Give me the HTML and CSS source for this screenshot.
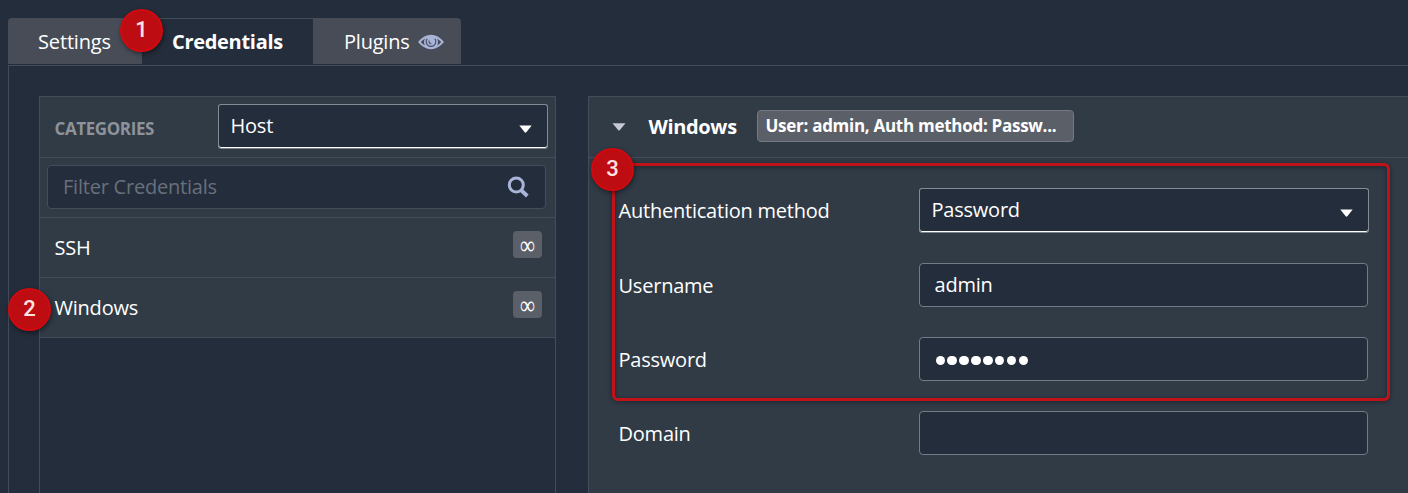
FILE: index.html
```html
<!DOCTYPE html>
<html lang="en">
<head>
<meta charset="utf-8">
<title>Credentials</title>
<link rel="stylesheet" href="styles.css">
</head>
<body>
<nav class="tabs">
  <div class="tab tab-settings">Settings</div>
  <div class="tab tab-active">Credentials</div>
  <div class="tab tab-plugins">Plugins
    <svg class="eye" width="26" height="16" viewBox="0 0 26 16"><path fill="#a9b5d8" fill-rule="evenodd" d="M0 8Q6 .7 13 .7T26 8Q20 15.2 13 15.2T0 8ZM2.800 8Q4.500 10 7 11.500Q5 8 7 4.500Q4.500 6 2.800 8ZM23.200 8Q21.500 6 19 4.500Q21 8 19 11.500Q21.500 10 23.200 8Z"/><path d="M9.300 4.800Q7.800 6 8.300 8.300Q9.200 12.300 13 12.300T17.700 8.300Q18.200 6 16.700 4.800M11 6.500Q10.800 9.600 13.300 9.600" fill="none" stroke="#4a5065" stroke-width="1.200"/></svg>
  </div>
</nav>
<main class="content">
  <section class="panel categories">
    <header class="cat-head">
      <span class="cat-title">CATEGORIES</span>
      <div class="select select-host"><span>Host</span><svg class="caret" width="13" height="8" viewBox="0 0 13 8"><path d="M.3.400h12.400L7.300 7.300q-.8.800-1.600 0z" fill="#fff"/></svg></div>
    </header>
    <div class="search-row">
      <div class="search"><span>Filter Credentials</span><svg width="22" height="22" viewBox="0 0 22 22" fill="none" stroke="#a9b5d8"><circle cx="9.300" cy="9" r="7" stroke-width="3"/><path d="M14 14l6.300 6" stroke-width="3.800"/></svg></div>
    </div>
    <div class="item"><span>SSH</span><span class="infinity"><span>∞</span></span></div>
    <div class="item"><span>Windows</span><span class="infinity"><span>∞</span></span></div>
  </section>
  <section class="panel details">
    <header class="detail-head">
      <svg width="14" height="8" viewBox="0 0 14 8"><path d="M.5.300h13L7.700 7.200q-.7.700-1.400 0z" fill="#c6c9d3"/></svg>
      <h2 class="detail-title">Windows</h2>
      <span class="summary">User: admin, Auth method: Passw...</span>
    </header>
    <div class="form">
      <div class="label">Authentication method</div>
      <div class="select"><span>Password</span><svg class="caret" width="13" height="8" viewBox="0 0 13 8"><path d="M.3.400h12.400L7.300 7.300q-.8.800-1.600 0z" fill="#fff"/></svg></div>
      <div class="label">Username</div>
      <div class="field">admin</div>
      <div class="label">Password</div>
      <div class="field dots"><i></i><i></i><i></i><i></i><i></i><i></i><i></i><i></i></div>
      <div class="label">Domain</div>
      <div class="field"></div>
    </div>
  </section>
</main>
<div class="outline"></div>
<div class="marker marker-one">1</div>
<div class="marker marker-two">2</div>
<div class="marker marker-three">3</div>
</body>
</html>
```
FILE: styles.css
```css
* { box-sizing: border-box; }
body {
  margin: 0;
  width: 1408px;
  height: 493px;
  padding: 18px 0 0 8px;
  overflow: hidden;
  position: relative;
  background: #242d3b;
  color: #fff;
  font: 20px/28px "Open Sans", sans-serif;
  letter-spacing: -.22px;
}
.tabs { display: flex; height: 47px; }
.tab { height: 46px; padding-top: 10px; background: #474c57; white-space: nowrap; }
.tab-settings { width: 134px; padding-left: 30px; border-radius: 4px 0 0 0; letter-spacing: -.15px; }
.tab-active { width: 171px; padding: 9px 0 0 30px; background: #242d3b; border-top: 1px solid #434c58; font-weight: 700; letter-spacing: -.3px; }
.tab-plugins { width: 148px; padding-left: 31px; display: flex; gap: 8px; border-radius: 0 4px 0 0; }
.eye { margin-top: 6px; }
.content {
  display: grid;
  grid-template-columns: 517px 1fr;
  gap: 32px;
  height: 428px;
  padding: 30px 0 0 30px;
  border-top: 1px solid #434c58;
  border-left: 1px solid #434c58;
}
.panel { border: 1px solid #434c58; border-bottom: 0; }
.cat-head { display: flex; align-items: flex-start; justify-content: space-between; height: 61px; padding: 7px 7px 0 14.500px; background: #313b46; border-bottom: 1px solid #434c58; }
.cat-title { padding-top: 11px; color: #8d929b; font-size: 17px; line-height: 28px; font-weight: 700; letter-spacing: -.4px; }
.select {
  display: flex;
  justify-content: space-between;
  width: 450px;
  height: 45px;
  padding: 7px 15.500px 0 11.500px;
  background: #242d3b;
  border: 1px solid #858b95;
  border-bottom-color: #7d838d;
  border-radius: 3px;
  box-shadow: inset 0 -1px #fff;
}
.select-host { width: 330px; }
.caret { margin-top: 13px; }
.search-row { height: 60px; padding: 7px; background: #313b46; border-bottom: 1px solid #434c58; }
.search { display: flex; justify-content: space-between; width: 499px; height: 44px; padding: 7px 16px 0 15px; background: #242d3b; border: 1px solid #434c58; border-radius: 4px; color: #69707b; }
.search svg { margin-top: 3px; }
.item { display: flex; justify-content: space-between; height: 60px; padding: 16px 13px 0 14.500px; background: #313b46; border-bottom: 1px solid #434c58; }
.infinity { width: 29px; height: 27px; margin-top: -3px; border-radius: 4px; background: #5b5f67; text-align: center; font: 21px/29px "Liberation Serif", serif; }
.infinity span { display: inline-block; transform: scaleY(1.25); }
.details { border-right: 0; background: #313b46; }
.detail-head { display: flex; align-items: center; height: 61px; padding: 0 0 1px 23px; border-bottom: 1px solid #434c58; }
.detail-title { flex: none; width: 131px; margin: 0; padding-left: 22.500px; font-size: 20px; font-weight: 700; letter-spacing: -.35px; }
.summary { width: 317px; height: 32px; margin-top: -1px; padding-left: 7.500px; border: 1px solid #747982; border-radius: 4px; background: #5b5f67; font-size: 17px; line-height: 30px; font-weight: 700; letter-spacing: -.28px; white-space: nowrap; }
.form { display: grid; grid-template-columns: 300.500px 450px; grid-template-rows: 45px 44px 44px 44px; row-gap: 30px; padding: 30px 0 0 29.500px; }
.label { padding-top: 9px; }
.field { width: 449px; height: 44px; padding: 7px 14.500px; border: 1px solid #747b87; border-radius: 4px; background: #242d3b; }
.dots { display: flex; align-items: center; gap: 2.400px; padding: 3px 15.500px 0; }
.dots i { width: 9.500px; height: 9.500px; border-radius: 50%; background: #fff; }
.outline { position: absolute; left: 612px; top: 163px; width: 778px; height: 238px; border: 3px solid #c01319; border-radius: 6px; box-shadow: 0 1px 5px #0006, inset 0 1px 5px #0006; }
.marker { position: absolute; width: 43px; height: 43px; border: 2px solid #d00a0f; border-radius: 50%; background: #bd0c12; box-shadow: 1px 2px 5px #0007; color: #ffe3e3; text-align: center; font: 500 22px/38px Roboto, sans-serif; letter-spacing: 0; }
.marker-one { left: 120px; top: 9px; }
.marker-two { left: 8px; top: 288px; }
.marker-three { left: 591px; top: 148px; }
```
